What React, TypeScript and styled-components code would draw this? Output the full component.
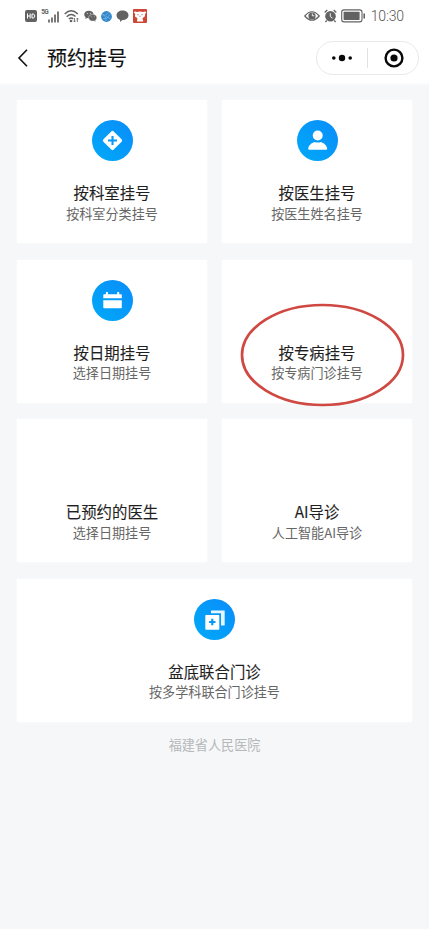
import React from "react";
import styled, { createGlobalStyle } from "styled-components";

const GlobalStyle = createGlobalStyle`
  * { box-sizing: border-box; }
  body {
    margin: 0;
    background: #f5f7f9;
    font-family: "Noto Sans CJK SC", sans-serif;
    color: #222;
  }
  svg { display: block; flex: none; }
`;

const Screen = styled.div`
  width: 429px;
  height: 929px;
  overflow: hidden;
  background: #f5f7f9;
`;

const Header = styled.header`
  height: 83px;
  background: #fff;
  box-shadow: 0 1px 3px rgba(255, 255, 255, 0.9);
`;

const StatusBar = styled.div`
  height: 32px;
  padding: 0 25px;
  display: flex;
  justify-content: space-between;
  align-items: center;
`;

const StatusGroup = styled.div<{ $gap: number }>`
  display: flex;
  align-items: center;
  gap: ${({ $gap }) => $gap}px;
`;

const Clock = styled.span`
  margin-left: 1px;
  font-family: Roboto, sans-serif;
  font-size: 14px;
  font-weight: 300;
  letter-spacing: -0.15px;
  line-height: 16px;
  color: #555;
`;

const NavBar = styled.div`
  height: 51px;
  padding: 0 10px 0 17px;
  display: flex;
  align-items: center;
`;

const PageTitle = styled.h1`
  margin: 1px auto 0 18px;
  font-size: 20px;
  line-height: 28px;
  font-weight: 400;
  color: #111;
  -webkit-text-stroke: 0.15px #111;
`;

const Capsule = styled.div`
  width: 103px;
  height: 34px;
  padding-right: 1px;
  border: 1px solid #e9e9e9;
  border-radius: 17px;
  display: grid;
  grid-template-columns: 50px 1px 52px;
  align-items: center;
  justify-items: center;
`;

const CapsuleDivider = styled.i`
  width: 1px;
  height: 20px;
  background: #e2e2e2;
`;

const Grid = styled.main`
  padding: 17px 17px 0;
  display: grid;
  grid-template-columns: 190px 190px;
  grid-auto-rows: 143px;
  gap: 16.6px 15px;
`;

const Card = styled.section<{ $wide?: boolean }>`
  position: relative;
  grid-column: ${({ $wide }) => ($wide ? "1 / -1" : "auto")};
  padding-top: 20px;
  background: #fff;
  box-shadow: 0 0 2px #fff;
  display: flex;
  flex-direction: column;
  align-items: center;
`;

const IconSlot = styled.div<{ $filled: boolean }>`
  width: 41px;
  height: 41px;
  border-radius: 50%;
  background: ${({ $filled }) =>
    $filled ? "linear-gradient(45deg, #00aaf8, #0a8cfa)" : "transparent"};
`;

const CardTitle = styled.h2`
  margin: 20px 0 0;
  font-size: 15.4px;
  line-height: 22px;
  font-weight: 400;
  color: #1f1f1f;
  -webkit-text-stroke: 0.12px #1f1f1f;
`;

const CardNote = styled.p`
  margin: 0.5px 0 0;
  font-size: 13.1px;
  line-height: 20px;
  color: #666;
`;

const Highlight = styled.svg`
  position: absolute;
  left: 18px;
  top: 42px;
`;

const Footer = styled.footer`
  margin-top: 13.5px;
  text-align: center;
  font-size: 13.1px;
  line-height: 20px;
  color: #b5b7b9;
`;

const gray = "#626262";

const HdIcon = () => (
  <svg width="12" height="12" viewBox="0 0 12 12">
    <rect width="12" height="12" rx="2" fill={gray} />
    <path d="M2.500 3.500v5M5.200 3.500v5M2.500 6h2.700M7 4h1.200c2 0 2 4 0 4H7z" fill="none" stroke="#fff" strokeWidth="1" />
  </svg>
);

const SignalText = styled.span`
  align-self: flex-start;
  font: 700 6.5px/7px Roboto, sans-serif;
  letter-spacing: -0.6px;
  color: ${gray};
`;

const Signal = styled.div`
  display: flex;
  height: 14px;
  width: 19px;
  justify-content: space-between;
`;

const BarsIcon = () => (
  <svg width="12" height="14" viewBox="0 0 12 14">
    <path d="M1 10.500v3M4 8.500v5M7 5.500v8M10 2.500v11" stroke={gray} strokeWidth="1.700" />
  </svg>
);

const WifiIcon = () => (
  <svg width="15" height="14" viewBox="0 0 15 14">
    <path d="M.7 5Q7.200-1.400 13.800 5M2.700 7.700q4.500-4.200 8.800-.2M4.800 10q2.500-2 4.400 0" fill="none" stroke={gray} strokeWidth="1.500" />
    <circle cx="7" cy="12" r="1.300" fill={gray} />
    <path d="M10.500 9v4M9.300 11.700l1.200 1.300 1.200-1.300M13.400 13V9.200M12.300 10.300l1.100-1.200 1.100 1.200" fill="none" stroke={gray} strokeWidth=".8" />
  </svg>
);

const WechatIcon = () => (
  <svg width="13" height="12" viewBox="0 0 13 12">
    <path d="M4.900.7C2.200.7.2 2.300.2 4.400c0 1.200.6 2.100 1.500 2.800L1.300 9l1.900-1 1.700.2c2.600 0 4.700-1.700 4.700-3.800S7.500.7 4.900.7z" fill={gray} />
    <path d="M8.700 4.300c-2.300 0-4.100 1.500-4.100 3.400s1.800 3.400 4.100 3.400l1.400-.2 1.700.9-.4-1.600c.9-.6 1.400-1.500 1.400-2.500 0-1.900-1.800-3.400-4.100-3.400z" fill={gray} stroke="#fff" strokeWidth=".4" />
    <g fill="#fff"><circle cx="3.300" cy="3.400" r=".5" /><circle cx="6.300" cy="3.200" r=".5" /><circle cx="7.500" cy="6.800" r=".4" /><circle cx="10.200" cy="6.800" r=".4" /></g>
  </svg>
);

const GlobeIcon = () => (
  <svg width="11" height="11" viewBox="0 0 11 11">
    <circle cx="5.500" cy="5.500" r="5.400" fill="#3388cb" />
    <path d="M1 3.500q3 2.500 7-2.500M1.500 8q5 .5 8-5M5 10q0-5-3-7M5.500 5.500l4 2.500" fill="none" stroke="#83bce5" strokeWidth=".6" />
  </svg>
);

const BubbleIcon = () => (
  <svg width="13" height="12" viewBox="0 0 12 12">
    <path d="M6 .4C2.600.4 0 2.500 0 5.200c0 2.300 1.600 4 3.700 4.700L3.500 12 6 10c3.400 0 6-2 6-4.800S9.400.4 6 .4z" fill={gray} />
  </svg>
);

const MascotIcon = () => (
  <svg width="14" height="14" viewBox="0 0 14 14">
    <rect width="14" height="14" rx="1" fill="#cf4634" />
    <path d="M.8 3Q2 1.800 4 3q3-1 6 0 2-1.200 3.200 0L12 5.500q.6 2-1.500 3L9.500 9l.8 3.500H4L4.400 9l-2-1Q1.500 6.700 2.300 5.300z" fill="#fff" />
    <path d="M4.200 5.700h1.400M8.300 5.600h1.400M6.300 7.200h1.300" fill="none" stroke="#8b4741" strokeWidth=".7" />
  </svg>
);

const EyeIcon = () => (
  <svg width="16" height="12" viewBox="0 0 16 12">
    <path d="M.8 6Q8-2.500 15.200 6 8 14.500.8 6z" fill="none" stroke={gray} strokeWidth="1.200" />
    <circle cx="8" cy="6" r="3.600" fill={gray} />
    <path d="M8.300 3.500v2.300h2" fill="none" stroke="#fff" strokeWidth=".9" />
  </svg>
);

const AlarmIcon = () => (
  <svg width="13" height="14" viewBox="0 0 13 14">
    <circle cx="6.500" cy="7.300" r="5.300" fill={gray} />
    <path d="M.7 3.500 3.300 1M9.700 1l2.600 2.500M2.800 11.500 1.400 13M10.200 11.500l1.400 1.500" stroke={gray} strokeWidth="1.300" />
    <path d="M6.300 4.200v3.300l2.200 1.700" fill="none" stroke="#fff" strokeWidth=".9" />
  </svg>
);

const BatteryIcon = () => (
  <svg width="25" height="14" viewBox="0 0 25 14">
    <rect x=".7" y=".9" width="20.300" height="12" rx="2.300" fill="#fff" stroke={gray} strokeWidth="1.100" />
    <rect x="2.600" y="2.800" width="16" height="8.200" rx=".7" fill={gray} />
    <path d="M23.200 4.500v5" stroke={gray} strokeWidth="1.600" />
  </svg>
);

const BackIcon = () => (
  <svg width="12" height="20" viewBox="0 0 12 20">
    <path d="M10 1.700 2 10l8 8.300" fill="none" stroke="#111" strokeWidth="1.600" />
  </svg>
);

const MoreIcon = () => (
  <svg width="22" height="8" viewBox="0 0 22 8" fill="#080808">
    <circle cx="2.800" cy="4" r="1.800" />
    <circle cx="11" cy="4" r="3.200" />
    <circle cx="19.200" cy="4" r="1.800" />
  </svg>
);

const TargetIcon = () => (
  <svg width="20" height="20" viewBox="0 0 20 20">
    <circle cx="10" cy="10" r="8.400" fill="none" stroke="#080808" strokeWidth="2.400" />
    <circle cx="10" cy="10" r="3.600" fill="#080808" />
  </svg>
);

const DepartmentIcon = () => (
  <svg width="41" height="41" viewBox="0 0 41 41">
    <rect x="13.200" y="13.200" width="14.600" height="14.600" rx="1.700" transform="rotate(45 20.500 20.500)" fill="#fff" />
    <path d="M20.500 16v9M16 20.500h9" stroke="#0799f8" strokeWidth="2.100" />
  </svg>
);

const DoctorIcon = () => (
  <svg width="41" height="41" viewBox="0 0 41 41" fill="#fff">
    <circle cx="20.700" cy="15.500" r="5" />
    <path d="M11.200 28.800c.4-3.600 3.400-5.900 6.400-6.800q3.100 1.200 6.200 0c3 .9 6 3.200 6.400 6.800q0 .9-.9.900H12.100q-.9 0-.9-.9z" />
  </svg>
);

const CalendarIcon = () => (
  <svg width="41" height="41" viewBox="0 0 41 41" fill="#fff">
    <path d="M11.300 18.200V15q0-.8.8-.8h1.800v-2.200h2v2.200h9.300v-2.200h2v2.200H29q.8 0 .8.800v3.200zM11.300 20.200h18.500v7.300q0 .8-.8.800H12.100q-.8 0-.8-.8z" />
  </svg>
);

const JointClinicIcon = () => (
  <svg width="41" height="41" viewBox="0 0 41 41">
    <path d="M17 11.500h13.700v15H27V14.300H17z" fill="#e5f6ff" />
    <rect x="11.300" y="16" width="14" height="14.700" rx=".7" fill="#fff" />
    <path d="M18.300 19.800v6.400M15.100 23h6.400" stroke="#0799f8" strokeWidth="2.200" />
  </svg>
);

interface Entry {
  title: string;
  note: string;
  icon?: React.ReactNode;
  wide?: boolean;
  highlighted?: boolean;
}

const entries: Entry[] = [
  { title: "按科室挂号", note: "按科室分类挂号", icon: <DepartmentIcon /> },
  { title: "按医生挂号", note: "按医生姓名挂号", icon: <DoctorIcon /> },
  { title: "按日期挂号", note: "选择日期挂号", icon: <CalendarIcon /> },
  { title: "按专病挂号", note: "按专病门诊挂号", highlighted: true },
  { title: "已预约的医生", note: "选择日期挂号" },
  { title: "AI导诊", note: "人工智能AI导诊" },
  { title: "盆底联合门诊", note: "按多学科联合门诊挂号", icon: <JointClinicIcon />, wide: true },
];

export default function App() {
  return (
    <Screen>
      <GlobalStyle />
      <Header>
        <StatusBar>
          <StatusGroup $gap={4.2}>
            <HdIcon />
            <Signal>
              <SignalText>5G</SignalText>
              <BarsIcon />
            </Signal>
            <WifiIcon />
            <WechatIcon />
            <GlobeIcon />
            <BubbleIcon />
            <MascotIcon />
          </StatusGroup>
          <StatusGroup $gap={4}>
            <EyeIcon />
            <AlarmIcon />
            <BatteryIcon />
            <Clock>10:30</Clock>
          </StatusGroup>
        </StatusBar>
        <NavBar>
          <BackIcon />
          <PageTitle>预约挂号</PageTitle>
          <Capsule>
            <MoreIcon />
            <CapsuleDivider />
            <TargetIcon />
          </Capsule>
        </NavBar>
      </Header>
      <Grid>
        {entries.map((entry) => (
          <Card key={entry.title} $wide={entry.wide}>
            <IconSlot $filled={Boolean(entry.icon)}>{entry.icon}</IconSlot>
            <CardTitle>{entry.title}</CardTitle>
            <CardNote>{entry.note}</CardNote>
            {entry.highlighted && (
              <Highlight width="166" height="106" viewBox="0 0 166 106">
                <ellipse cx="82.500" cy="53" rx="80.500" ry="50" fill="none" stroke="#cf4841" strokeWidth="2.700" />
              </Highlight>
            )}
          </Card>
        ))}
      </Grid>
      <Footer>福建省人民医院</Footer>
    </Screen>
  );
}
